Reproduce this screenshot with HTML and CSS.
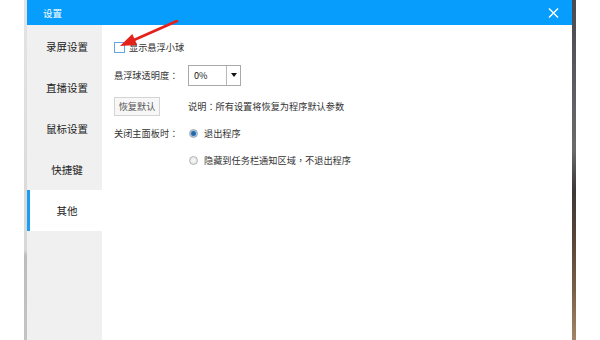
FILE: index.html
```html
<!DOCTYPE html>
<html lang="zh-CN">
<head>
<meta charset="utf-8">
<title>设置</title>
<link rel="stylesheet" href="styles.css">
</head>
<body>
<div class="desk-left"><div class="edge"></div></div>
<div class="dialog">
  <div class="titlebar">
    <span class="title">设置</span>
    <svg class="close" width="11" height="10" viewBox="0 0 11 10"><path d="M1 0.5 L10 9.5 M10 0.5 L1 9.5" stroke="#fff" stroke-width="1.4" fill="none"/></svg>
  </div>
  <div class="main">
    <nav class="sidebar">
      <div class="nav-item">录屏设置</div>
      <div class="nav-item">直播设置</div>
      <div class="nav-item">鼠标设置</div>
      <div class="nav-item">快捷键</div>
      <div class="nav-item active">其他</div>
    </nav>
    <section class="content">
      <div class="row row-check">
        <span class="checkbox"></span>
        <span class="text">显示悬浮小球</span>
      </div>
      <div class="row row-opacity">
        <span class="label">悬浮球透明度<span class="punct" lang="zh-TW">：</span></span>
        <div class="select"><span class="select-value">0%</span><span class="select-btn"><span class="caret"></span></span></div>
      </div>
      <div class="row row-reset">
        <span class="label"><span class="button">恢复默认</span></span>
        <span class="text">说明<span class="punct" lang="zh-TW">：</span>所有设置将恢复为程序默认参数</span>
      </div>
      <div class="row row-radio">
        <span class="label">关闭主面板时<span class="punct" lang="zh-TW">：</span></span>
        <span class="radio checked"></span>
        <span class="text">退出程序</span>
      </div>
      <div class="row row-radio">
        <span class="label"></span>
        <span class="radio"></span>
        <span class="text">隐藏到任务栏通知区域<span class="punct" lang="zh-TW">，</span>不退出程序</span>
      </div>
      <svg class="arrow" width="80" height="40" viewBox="0 0 80 40">
        <path d="M75 1 L32 20" stroke="#e3221c" stroke-width="2.8" stroke-linecap="round" fill="none"/>
        <polygon points="18,26 30.3,14.1 35.1,25.1" fill="#e3221c"/>
      </svg>
    </section>
  </div>
</div>
<div class="shade"></div>
<div class="desk-right"></div>
</body>
</html>
```
FILE: styles.css
```css
html, body {
  margin: 0;
  padding: 0;
}
body {
  width: 600px;
  height: 340px;
  overflow: hidden;
  display: flex;
  background: #fff;
  font-family: "Noto Sans CJK SC", "Noto Sans", sans-serif;
  color: #333;
}
.desk-left {
  width: 27px;
  display: flex;
  justify-content: flex-end;
}
.edge {
  width: 3px;
  height: 340px;
  background: linear-gradient(#e4e4e4 0, #d8d8d8 250px, #bcbcbc 256px, #c4c4c4 340px);
}
.dialog {
  width: 545px;
  display: flex;
  flex-direction: column;
  background: #fff;
}
.titlebar {
  height: 25px;
  background: #069dfd;
  display: flex;
  align-items: center;
  justify-content: space-between;
  padding: 0 13px 0 16px;
}
.title {
  color: #fff;
  font-size: 9.5px;
}
.close {
  display: block;
  margin-top: 1px;
}
.main {
  flex: 1;
  display: flex;
}
.sidebar {
  width: 75px;
  background: #f0f0f0;
  padding-top: 1px;
}
.nav-item {
  height: 41px;
  display: flex;
  align-items: center;
  justify-content: center;
  padding-left: 5px;
  font-size: 10.5px;
  color: #222;
}
.nav-item.active {
  background: #fff;
  box-shadow: inset 3px 0 0 #1a9ef5;
}
.content {
  position: relative;
  flex: 1;
  padding: 12px 0 0 12px;
  font-size: 9.2px;
}
.punct {
  font-family: "Noto Sans CJK TC", "Noto Sans CJK SC", sans-serif;
}
.row {
  display: flex;
  align-items: center;
}
.row-check {
  height: 20px;
}
.row-opacity {
  height: 22px;
  margin-top: 7px;
}
.row-reset {
  height: 20px;
  margin-top: 10px;
}
.row-radio {
  height: 20px;
  margin-top: 7px;
}
.checkbox {
  width: 9px;
  height: 9px;
  border: 1px solid #66a6e0;
  background: #fff;
  margin-right: 4px;
}
.label {
  width: 74px;
  flex: none;
}
.select {
  width: 51px;
  height: 19px;
  border: 1px solid #a9a9a9;
  display: flex;
}
.select-value {
  width: 32px;
  padding-left: 5px;
  border-right: 1px solid #b8b8b8;
  display: flex;
  align-items: center;
  color: #222;
}
.select-btn {
  flex: 1;
  display: flex;
  align-items: center;
  justify-content: center;
}
.caret {
  width: 0;
  height: 0;
  border-left: 3.5px solid transparent;
  border-right: 3.5px solid transparent;
  border-top: 4px solid #111;
}
.button {
  display: inline-flex;
  align-items: center;
  justify-content: center;
  width: 44px;
  height: 17px;
  border: 1px solid #d4d4d4;
  background: #f7f7f7;
  color: #555;
}
.radio {
  width: 7px;
  height: 7px;
  border-radius: 50%;
  border: 1px solid #b4b4b4;
  background: radial-gradient(#fafafa, #dcdcdc);
  margin: 0 6px 0 1px;
  flex: none;
}
.radio.checked {
  border-color: #9aa4ae;
  background: radial-gradient(#1f5e9a 0, #2a6fb0 2px, #9fc0de 3px, #e8eef4 4px);
}
.arrow {
  position: absolute;
  left: 0;
  top: -5px;
}
.shade {
  width: 4px;
  background: linear-gradient(#4a4950 0, #5e5d62 90px, #6c6a6a 150px, #3c3938 190px, #5a4538 240px, #7a5f48 290px, #a48566 340px);
}
.desk-right {
  flex: 1;
  background: #fff;
}
```
